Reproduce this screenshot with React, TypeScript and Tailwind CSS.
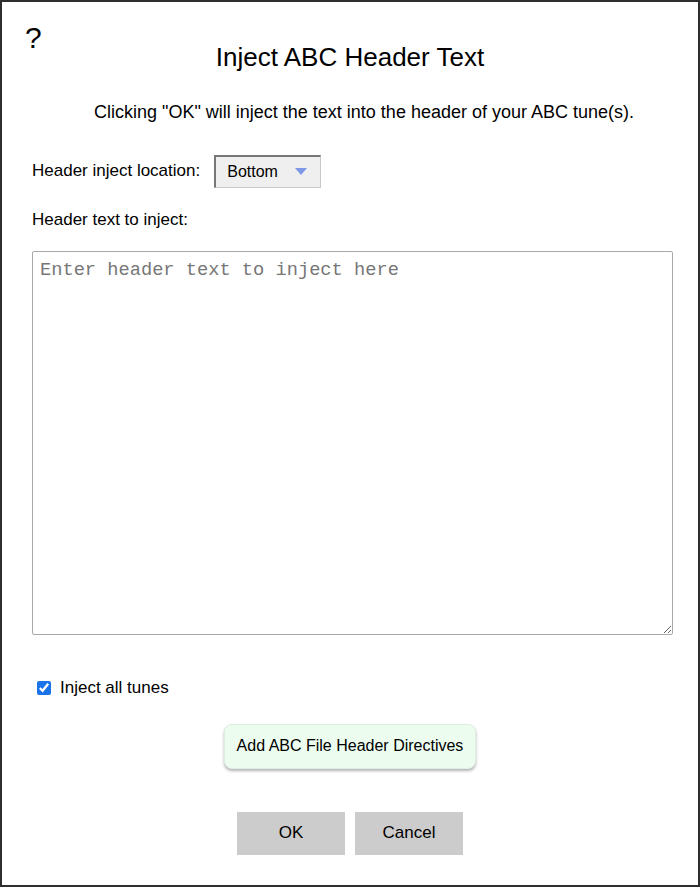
import { useState } from 'react';

export default function App() {
  const [allTunes, setAllTunes] = useState(true);

  return (
    <div className="w-[700px] h-[887px] border-2 border-[#2e2e2e] bg-white relative font-['Liberation_Sans',Arial,sans-serif] text-black box-border">
      <div className="absolute left-[23px] top-[21px] text-[30px] leading-none">?</div>
      <h1 className="text-center text-[26px] pt-[40px] leading-[30px]">Inject ABC Header Text</h1>
      <p className="text-center text-[18px] mt-[29px] leading-[22px] pl-[28px]">
        Clicking "OK" will inject the text into the header of your ABC tune(s).
      </p>
      <div className="px-[30px]">
        <div className="flex items-center mt-[31px] h-[34px]">
          <span className="text-[17px]">Header inject location:</span>
          <div className="ml-[14px] w-[107px] h-[33px] bg-[#efefef] border border-[#c8c8c8] border-l-[#777] border-t-[#777] border-l-2 border-t-2 flex items-center justify-between pl-[11px] pr-[13px] text-[16px]">
            <span>Bottom</span>
            <svg width="12" height="8" viewBox="0 0 12 8">
              <path d="M0 0 L12 0 L6 7 Z" fill="#7f97e8" />
            </svg>
          </div>
        </div>
        <div className="text-[17px] mt-[22px] leading-[20px]">Header text to inject:</div>
        <textarea
          className="block mt-[21px] w-[641px] h-[384px] border border-[#a9a9a9] rounded-[2px] px-[7px] py-[6px] text-[18.7px] leading-[24px] font-['Liberation_Mono','Courier_New',monospace] placeholder:text-[#777] outline-none"
          placeholder="Enter header text to inject here"
        />
        <label className="flex items-center mt-[40px] ml-[5px] text-[17px]">
          <input
            type="checkbox"
            checked={allTunes}
            onChange={() => setAllTunes(!allTunes)}
            className="w-[14px] h-[14px] accent-[#1a73e8] m-0"
          />
          <span className="ml-[9px]">Inject all tunes</span>
        </label>
        <div className="flex justify-center mt-[23px]">
          <button className="w-[252px] h-[45px] rounded-[8px] bg-[#ecfdf0] text-[16px] shadow-[0_2px_3px_rgba(0,0,0,0.3)] border border-[#dfeee3]">
            Add ABC File Header Directives
          </button>
        </div>
        <div className="flex justify-center gap-[10px] mt-[43px]">
          <button className="w-[108px] h-[43px] bg-[#cccccc] text-[17px]">OK</button>
          <button className="w-[108px] h-[43px] bg-[#cccccc] text-[17px]">Cancel</button>
        </div>
      </div>
    </div>
  );
}
